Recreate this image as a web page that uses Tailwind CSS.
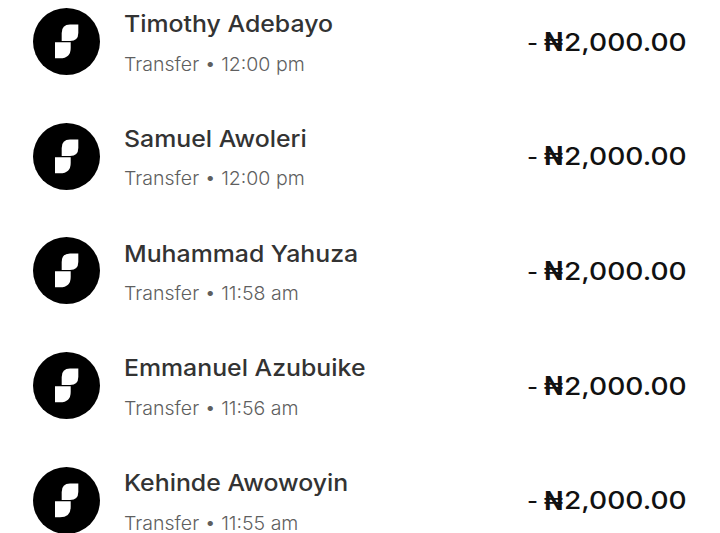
<!DOCTYPE html>
<html><head><meta charset="utf-8"><script src="https://cdn.jsdelivr.net/npm/@tailwindcss/browser@4"></script></head>
<body class="bg-white overflow-hidden">
<div class="w-[720px] h-[533px] overflow-hidden flex flex-col gap-[47.7px] pt-2 pl-[33px] pr-[33px] font-['Inter',sans-serif]">

<div class="flex items-center h-[67px] shrink-0">
<svg class="w-[67px] h-[67px] shrink-0" viewBox="0 0 67 67"><circle cx="33.5" cy="33.5" r="33.5" fill="#000"/><path d="M45.300 16.500H37Q28.700 16.500 28.700 25V33H37Q45.300 33 45.300 25Z" fill="#fff"/><path d="M22 34.300H37.700V40Q37.700 50.300 27 50.300H22Z" fill="#fff"/></svg>
<div class="ml-6 mt-[5px] flex flex-col gap-[13.5px] flex-1"><div class="text-[23px] leading-[26px] font-medium text-[#333] origin-left scale-x-[1.08]">Timothy Adebayo</div><div class="text-[18.5px] leading-[26px] font-light text-[#5f5f5f] origin-left scale-x-[1.055]">Transfer • 12:00 pm</div></div>
<div class="flex items-center mt-[2px] text-[24px] font-medium text-[#111]"><span class="mr-[6px] font-normal">-</span><span class="font-bold text-[25px] mr-[1px]">₦</span><span class="origin-left scale-x-[1.17] w-[123px]">2,000.00</span></div>
</div>

<div class="flex items-center h-[67px] shrink-0">
<svg class="w-[67px] h-[67px] shrink-0" viewBox="0 0 67 67"><circle cx="33.5" cy="33.5" r="33.5" fill="#000"/><path d="M45.300 16.500H37Q28.700 16.500 28.700 25V33H37Q45.300 33 45.300 25Z" fill="#fff"/><path d="M22 34.300H37.700V40Q37.700 50.300 27 50.300H22Z" fill="#fff"/></svg>
<div class="ml-6 mt-[5px] flex flex-col gap-[13.5px] flex-1"><div class="text-[23px] leading-[26px] font-medium text-[#333] origin-left scale-x-[1.08]">Samuel Awoleri</div><div class="text-[18.5px] leading-[26px] font-light text-[#5f5f5f] origin-left scale-x-[1.055]">Transfer • 12:00 pm</div></div>
<div class="flex items-center mt-[2px] text-[24px] font-medium text-[#111]"><span class="mr-[6px] font-normal">-</span><span class="font-bold text-[25px] mr-[1px]">₦</span><span class="origin-left scale-x-[1.17] w-[123px]">2,000.00</span></div>
</div>

<div class="flex items-center h-[67px] shrink-0">
<svg class="w-[67px] h-[67px] shrink-0" viewBox="0 0 67 67"><circle cx="33.5" cy="33.5" r="33.5" fill="#000"/><path d="M45.300 16.500H37Q28.700 16.500 28.700 25V33H37Q45.300 33 45.300 25Z" fill="#fff"/><path d="M22 34.300H37.700V40Q37.700 50.300 27 50.300H22Z" fill="#fff"/></svg>
<div class="ml-6 mt-[5px] flex flex-col gap-[13.5px] flex-1"><div class="text-[23px] leading-[26px] font-medium text-[#333] origin-left scale-x-[1.08]">Muhammad Yahuza</div><div class="text-[18.5px] leading-[26px] font-light text-[#5f5f5f] origin-left scale-x-[1.055]">Transfer • 11:58 am</div></div>
<div class="flex items-center mt-[2px] text-[24px] font-medium text-[#111]"><span class="mr-[6px] font-normal">-</span><span class="font-bold text-[25px] mr-[1px]">₦</span><span class="origin-left scale-x-[1.17] w-[123px]">2,000.00</span></div>
</div>

<div class="flex items-center h-[67px] shrink-0">
<svg class="w-[67px] h-[67px] shrink-0" viewBox="0 0 67 67"><circle cx="33.5" cy="33.5" r="33.5" fill="#000"/><path d="M45.300 16.500H37Q28.700 16.500 28.700 25V33H37Q45.300 33 45.300 25Z" fill="#fff"/><path d="M22 34.300H37.700V40Q37.700 50.300 27 50.300H22Z" fill="#fff"/></svg>
<div class="ml-6 mt-[5px] flex flex-col gap-[13.5px] flex-1"><div class="text-[23px] leading-[26px] font-medium text-[#333] origin-left scale-x-[1.08]">Emmanuel Azubuike</div><div class="text-[18.5px] leading-[26px] font-light text-[#5f5f5f] origin-left scale-x-[1.055]">Transfer • 11:56 am</div></div>
<div class="flex items-center mt-[2px] text-[24px] font-medium text-[#111]"><span class="mr-[6px] font-normal">-</span><span class="font-bold text-[25px] mr-[1px]">₦</span><span class="origin-left scale-x-[1.17] w-[123px]">2,000.00</span></div>
</div>

<div class="flex items-center h-[67px] shrink-0">
<svg class="w-[67px] h-[67px] shrink-0" viewBox="0 0 67 67"><circle cx="33.5" cy="33.5" r="33.5" fill="#000"/><path d="M45.300 16.500H37Q28.700 16.500 28.700 25V33H37Q45.300 33 45.300 25Z" fill="#fff"/><path d="M22 34.300H37.700V40Q37.700 50.300 27 50.300H22Z" fill="#fff"/></svg>
<div class="ml-6 mt-[5px] flex flex-col gap-[13.5px] flex-1"><div class="text-[23px] leading-[26px] font-medium text-[#333] origin-left scale-x-[1.08]">Kehinde Awowoyin</div><div class="text-[18.5px] leading-[26px] font-light text-[#5f5f5f] origin-left scale-x-[1.055]">Transfer • 11:55 am</div></div>
<div class="flex items-center mt-[2px] text-[24px] font-medium text-[#111]"><span class="mr-[6px] font-normal">-</span><span class="font-bold text-[25px] mr-[1px]">₦</span><span class="origin-left scale-x-[1.17] w-[123px]">2,000.00</span></div>
</div>

</div>
</body></html>
